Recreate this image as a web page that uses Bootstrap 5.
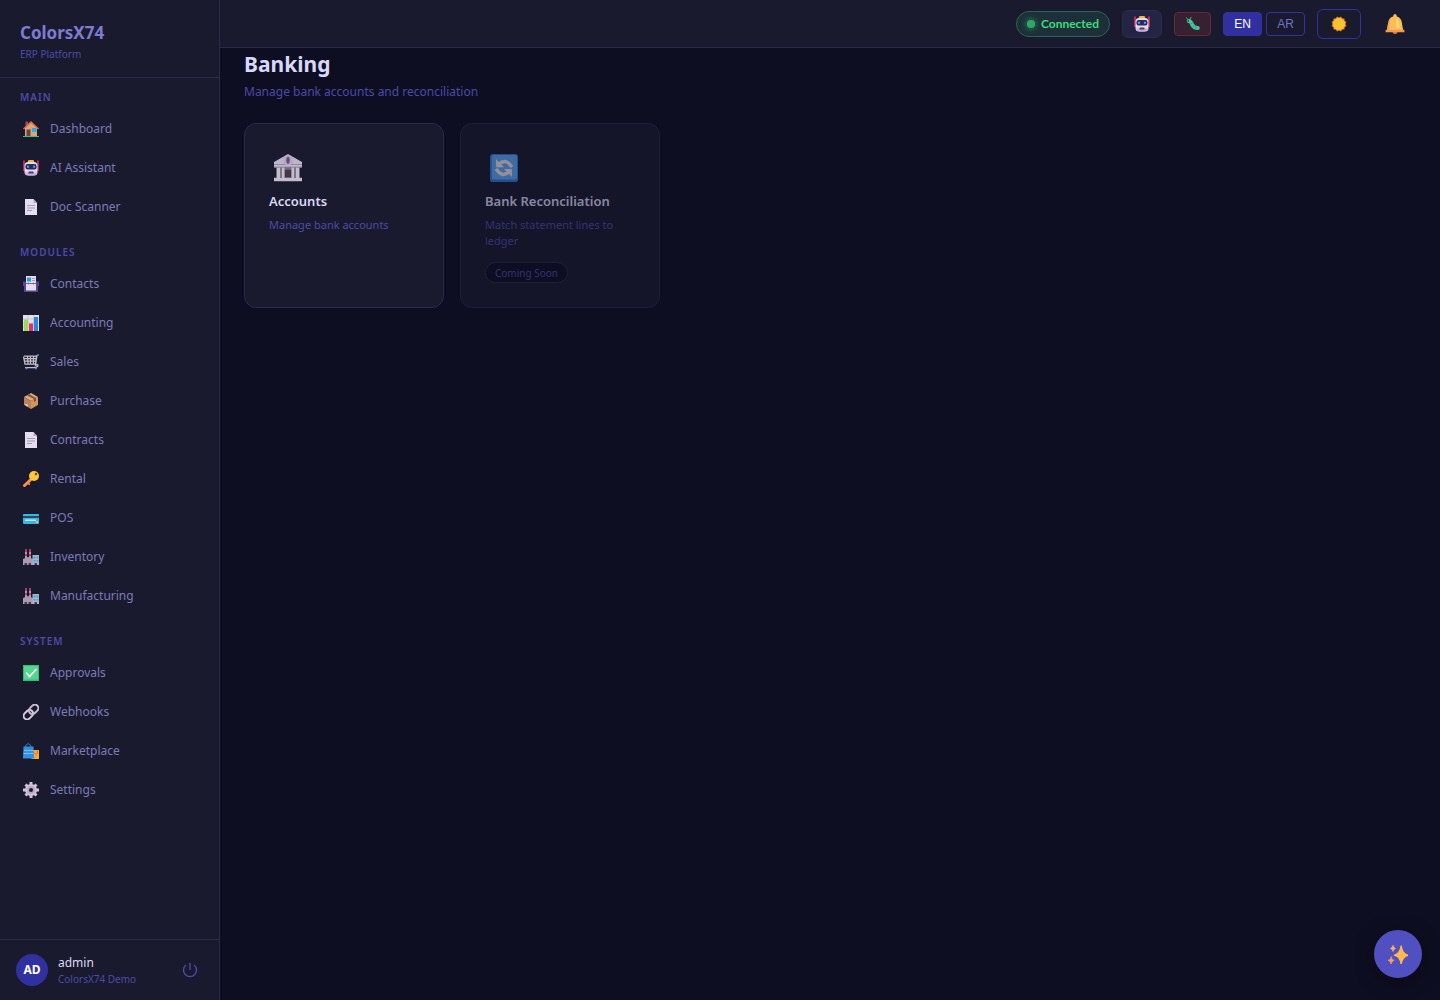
<!DOCTYPE html>
<html lang="en" data-bs-theme="dark">
<head>
<meta charset="utf-8">
<meta name="viewport" content="width=device-width, initial-scale=1">
<title>Banking - ColorsX74</title>
<link href="https://cdn.jsdelivr.net/npm/bootstrap@5.3.0/dist/css/bootstrap.min.css" rel="stylesheet">
<style>
:root{--page:#0e0e22;--panel:#1a1a2e;--line:#2a2a4a;--muted:#4a4aa8;--nav:#7a7ab8;--brand:#3030a0;--bright:#d8d8f8}
body{background:var(--page);color:var(--bright);font-family:"Noto Sans","Open Sans",sans-serif;font-size:13px}
button{font-family:inherit}
.side-panel{width:220px;background:var(--panel);border-right:1px solid var(--line)}
.brand-box{padding:20px 20px 14px;border-bottom:1px solid var(--line)}
.brand-name{font-size:17px;font-weight:700;line-height:25px;color:#7c7cd4}
.brand-sub{font-size:10px;line-height:18px;color:var(--muted)}
.side-nav{padding-top:12px}
.nav-group{margin-bottom:19px}
.group-label{font-size:10px;font-weight:600;letter-spacing:1px;line-height:14px;padding:0 20px 5px;margin:0;color:var(--muted);text-transform:uppercase}
.side-link{display:flex;align-items:center;gap:8px;height:39px;padding:0 20px;color:var(--nav);text-decoration:none;font-size:12px}
.side-link:hover{color:var(--bright)}
.ico-slot{width:22px;display:flex;justify-content:center}
.ico{width:16px;height:16px;display:block}
.user-box{height:61px;padding:0 16px;gap:10px;border-top:1px solid var(--line)}
.avatar{width:32px;height:32px;border-radius:50%;background:var(--brand);color:#fff;font-size:12px;font-weight:700}
.user-name{font-size:12px;line-height:16px}
.user-text{padding-top:1px}
.user-org{font-size:10px;line-height:16px;color:var(--muted)}
.plain-btn{background:none;border:0;padding:0;color:var(--muted)}
.top-bar{height:48px;background:var(--panel);border-bottom:1px solid var(--line);padding:0 24px;gap:12px}
.status-pill{height:26px;gap:6px;border-radius:13px;border:1px solid #276650;background:#1d3039;color:#3ddc7c;font:700 12px/24px Lato,sans-serif;padding:0 10px}
.status-dot{width:8px;height:8px;border-radius:50%;background:#2fa866;box-shadow:0 0 6px #2fa866}
.tool-btn{display:flex;align-items:center;justify-content:center;padding:0;border:1px solid;border-radius:6px;background:none}
.bot-btn{width:40px;height:28px;background:#242444;border-color:var(--line)}
.bug-btn{width:37px;height:24px;border-radius:4px;background:#37202f;border-color:#652838}
.lang-btn{width:39px;height:24px;border-radius:4px;border-color:var(--brand);color:#7070c8;font:12px "Liberation Sans",Arial,sans-serif}
.lang-btn.on{background:var(--brand);color:#fff}
.theme-btn{width:44px;height:30px;border-color:var(--brand)}
.bell-btn{width:43px;height:30px;border:0}
.page-body{padding:0 24px 24px}
.page-title{font-size:21px;font-weight:700;line-height:32px;margin:0 0 2px;color:var(--bright)}
.page-sub{font-size:12px;line-height:20px;margin:0 0 21px;color:var(--muted)}
.tile-grid{display:grid;grid-template-columns:repeat(auto-fill,200px);gap:16px}
.tile{background:var(--panel);border:1px solid var(--line);border-radius:12px;padding:24px;color:inherit;text-decoration:none}
.tile-off{opacity:.6}
.tile-ico{width:38px;height:40px;margin-bottom:3px;display:flex;align-items:center;justify-content:center}
.tile-ico .ico{width:28px;height:28px}
.tile-name{font-size:13px;font-weight:600;line-height:20px;margin:0 0 6px;color:var(--bright)}
.tile-text{font-size:11px;line-height:16px;margin:0;color:var(--muted)}
.soon{display:inline-block;margin-top:13px;height:21px;padding:0 9px;border:1px solid var(--line);border-radius:11px;background:var(--page);font-size:10px;line-height:20px;color:var(--muted)}
.ai-fab{position:fixed;right:18px;bottom:22px;width:48px;height:48px;border:0;border-radius:50%;background:#5050c0;box-shadow:0 4px 20px rgba(0,0,0,.4);display:flex;align-items:center;justify-content:center}
</style>
</head>
<body>
<svg class="d-none" aria-hidden="true">
<symbol id="home" viewBox="0 0 32 32"><path fill="#8a5a4a" d="M5 1h5v10H5z"/><path fill="#d9a877" d="M4 14 16 3l12 11v16H4z"/><path fill="#f4654a" d="M16 0 0 15l2 2L16 4l14 13 2-2z"/><path fill="#6b4248" d="M7 17h8v13H7z"/><path fill="#2da8f0" d="M18 14h9v8h-9z"/><path fill="#36c274" d="M0 30h32v2H0z"/></symbol>
<symbol id="bot" viewBox="0 0 32 32"><path stroke="#e8305f" stroke-width="3" d="M2 1v21M30 1v21"/><path fill="#f8b52c" d="M11 0h10l2 5H9z"/><rect x="3" y="4" width="26" height="27" rx="7" fill="#e5d8f1"/><path fill="#c7acdc" d="M4 25h24q-2 6-8 6h-8q-6 0-8-6z"/><rect x="5" y="8" width="22" height="11" rx="4" fill="#302a58"/><rect x="8" y="11" width="4" height="5" rx="2" fill="#29b6f6"/><rect x="20" y="11" width="4" height="5" rx="2" fill="#29b6f6"/><rect x="11" y="23" width="10" height="4" rx="1" fill="#4a3d62"/></symbol>
<symbol id="doc" viewBox="0 0 32 32"><path fill="#e5deef" d="M4 0h17l7 8v24H4z"/><path fill="#b4a7c3" d="M21 0v8h7z"/><path stroke="#a69ab7" stroke-width="2" d="M8 13h16M8 18h16M8 23h10"/></symbol>
<symbol id="cards" viewBox="0 0 32 32"><path fill="#594394" d="M0 11h32v9h-2v12H2V20H0z"/><path fill="#e6deef" d="M6 0h20v29H6z"/><path fill="#2499ee" d="M8 3h8v8H8z"/><path fill="#a99fba" d="M18 4h6v2h-6zM18 8h6v2h-6z"/><path stroke="#7b6c9c" stroke-width="2" fill="none" d="M6 15h20M11 13v4M21 13v4"/></symbol>
<symbol id="chart" viewBox="0 0 32 32"><path fill="#e6dfec" d="M0 0h32v32H0z"/><path stroke="#b7afbf" stroke-width="1" d="M0 8h32M0 16h32M0 24h32M10 0v32M21 0v32"/><path fill="#94dc59" d="M2 9h8v23H2z"/><path fill="#e92d68" d="M12 17h8v15h-8z"/><path fill="#2788dc" d="M22 4h8v28h-8z"/></symbol>
<symbol id="cart" viewBox="0 0 32 32"><path stroke="#c5bfc8" stroke-width="2.5" fill="none" d="M2 4h25L25 20H4L1 5M3 9h23M3 14h22M9 4l1 16M15 4v16M21 4v16M28 2l-3 21q5-4 5 1l-4 3H4"/><path stroke="#4791c9" stroke-width="3" d="M28 2h4"/><circle cx="7" cy="29" r="2" fill="#4791c9"/><circle cx="26" cy="29" r="2" fill="#4791c9"/></symbol>
<symbol id="box" viewBox="0 0 32 32"><path fill="#e0ad78" d="m16 0 14 8-14 8L2 8z"/><path fill="#bd805d" d="m2 8 14 8v16L2 24z"/><path fill="#d1955e" d="m30 8-14 8v16l14-8z"/><path fill="#835248" d="m8 5 4-3 14 8v6l-4 2v-6z"/><path fill="#f4dfd0" d="m5 21 5 3v3l-5-3z"/></symbol>
<symbol id="key" viewBox="0 0 32 32"><path stroke="#fa914b" stroke-width="6" stroke-linecap="round" d="M19 14 3 29"/><path stroke="#fa914b" stroke-width="3" d="m9 24 5 3"/><circle cx="22" cy="10" r="10" fill="#fec63b"/><circle cx="26" cy="6" r="2.5" fill="#5e4035"/></symbol>
<symbol id="bankcard" viewBox="0 0 32 32"><rect y="8" width="32" height="20" rx="2" fill="#32b7eb"/><path fill="#33445c" d="M0 12h32v4H0z"/><path fill="#d9dce9" d="M4 19h22v3H4z"/><path fill="#f5be40" d="M26 22h4v4h-4z"/></symbol>
<symbol id="factory" viewBox="0 0 32 32"><path fill="#a99cae" d="M4 1h4v18H4zM12 1h4v18h-4zM0 20l10-4 10 4v12H0z"/><path fill="#c13368" d="M4 2h4v4H4zM4 10h4v4H4zM12 2h4v4h-4zM12 10h4v4h-4z"/><path fill="#b3b0c6" d="M19 12h13v20H19z"/><path fill="#34a9e5" d="M21 15h4v4h-4zM27 15h4v4h-4zM21 22h4v3h-4zM27 22h4v3h-4z"/><path fill="#443a50" d="M3 28h5v4H3zM11 28h5v4h-5zM23 28h5v4h-5z"/></symbol>
<symbol id="check" viewBox="0 0 32 32"><path fill="#38b876" d="M0 0h32v32H0z"/><path fill="#55d68e" d="M2 2h28v27H2z"/><path d="m7 16 6 7L26 9" stroke="#fff" stroke-width="3" fill="none" stroke-linecap="round"/></symbol>
<symbol id="chain" viewBox="0 0 32 32"><g fill="none" stroke-width="4" transform="rotate(-45 16 16)"><rect x="-2" y="9" width="21" height="14" rx="7" stroke="#d8cddd"/><rect x="13" y="9" width="21" height="14" rx="7" stroke="#c9bfd0"/></g></symbol>
<symbol id="bags" viewBox="0 0 32 32"><path fill="#f6a934" d="M17 14h15v18H17z"/><path d="M22 19q6 9 7-3" fill="none" stroke="#e96c32" stroke-width="2"/><path fill="#348fe7" d="M1 7h20l1 24H0z"/><path d="M5 10V6q5-9 11 0v4" fill="none" stroke="#288bc1" stroke-width="2"/><path stroke="#7bc0f4" stroke-width="2" d="M2 15h19M1 21h20"/></symbol>
<symbol id="gear" viewBox="0 0 32 32"><g stroke="#cfc2da" stroke-width="6"><path d="M16 0v32M0 16h32M5 5l22 22M27 5 5 27"/></g><circle cx="16" cy="16" r="12" fill="#cfc2da"/><circle cx="16" cy="16" r="8" fill="#b9a8c8"/><circle cx="16" cy="16" r="4" fill="#1a1a2e"/></symbol>
<symbol id="bug" viewBox="0 0 32 32"><path d="M6 9q5 0 8 8t13 8" fill="none" stroke="#42c79b" stroke-width="9" stroke-linecap="round"/><path d="M4 6 1 1M9 5l3-5" stroke="#42c79b" stroke-width="2"/><circle cx="5" cy="9" r="2" fill="#244752"/><path stroke="#3293a0" stroke-width="2" d="m16 13-6 3m9 3-4 5m8-4-1 8"/></symbol>
<symbol id="sun" viewBox="0 0 32 32"><g fill="#f28a27"><path d="M5 5h22v22H5z"/><path transform="rotate(30 16 16)" d="M5 5h22v22H5z"/><path transform="rotate(60 16 16)" d="M5 5h22v22H5z"/></g><circle cx="16" cy="16" r="12" fill="#f9c22f"/></symbol>
<symbol id="bell" viewBox="0 0 32 32"><path fill="#cc744a" d="M12 27h8q0 5-4 5t-4-5z"/><path fill="#fbbd55" d="M16 0q3 0 3 4 7 2 8 10l2 12H3l2-12Q6 6 13 4q0-4 3-4z"/><path fill="#f39952" d="M9 8q-3 7-3 18H3l2-12zM1 25h30v4H1z"/><path fill="#ffdb7d" d="M18 7q5 2 5 15h-5z"/></symbol>
<symbol id="bank" viewBox="0 0 32 32"><path fill="#beb5c8" d="M16 0 32 9v6H0V9z"/><path fill="#736b80" d="M3 15h26v12H3z"/><path fill="#443748" d="M12 18h8v9h-8z"/><path fill="#c5bdcb" d="M3 15h4v12H3zM9 15h3v12H9zM20 15h3v12h-3zM25 15h4v12h-4zM0 27h32v4H0z"/><path stroke="#8f859a" d="M0 12h32M0 15h32"/><circle cx="16" cy="7" r="6" fill="#b5aabd"/><ellipse cx="16" cy="7" rx="2" ry="4" fill="#68459b"/></symbol>
<symbol id="sync" viewBox="0 0 32 32"><rect width="32" height="32" rx="3" fill="#3874d6"/><rect x="2" y="1" width="29" height="28" rx="2" fill="#5ea9f7"/><g fill="none" stroke="#efe6ef" stroke-width="4"><path d="M10 12q8-8 15 3"/><path d="M22 20q-8 8-15-3"/></g><path fill="#efe6ef" d="M7 6v9h9zM25 26v-9h-9z"/></symbol>
<symbol id="spark" viewBox="0 0 32 32"><path fill="#ffb84e" d="M21 3q2 13 11 15-9 2-11 14-2-12-11-14Q19 16 21 3z" stroke="#ffb84e" stroke-width="2" stroke-linejoin="round"/><path fill="#f99a67" d="M5 20q1 6 5 6-4 1-5 6-1-5-5-6 4 0 5-6z" stroke="#f99a67" stroke-width="1"/><path fill="#f9b067" d="M8 2q1 4 4 5-3 1-4 5-1-4-4-5 3-1 4-5z" stroke="#f9b067" stroke-width="1"/></symbol>
</svg>
<div class="d-flex min-vh-100">
<aside class="side-panel vh-100 sticky-top d-flex flex-column flex-shrink-0">
<div class="brand-box"><div class="brand-name">ColorsX74</div><div class="brand-sub">ERP Platform</div></div>
<nav class="side-nav flex-grow-1 overflow-hidden" aria-label="Modules">
<div class="nav-group"><h2 class="group-label">Main</h2>
<a class="side-link" href="#"><span class="ico-slot"><svg class="ico"><use href="#home"/></svg></span>Dashboard</a>
<a class="side-link" href="#"><span class="ico-slot"><svg class="ico"><use href="#bot"/></svg></span>AI Assistant</a>
<a class="side-link" href="#"><span class="ico-slot"><svg class="ico"><use href="#doc"/></svg></span>Doc Scanner</a></div>
<div class="nav-group"><h2 class="group-label">Modules</h2>
<a class="side-link" href="#"><span class="ico-slot"><svg class="ico"><use href="#cards"/></svg></span>Contacts</a>
<a class="side-link" href="#"><span class="ico-slot"><svg class="ico"><use href="#chart"/></svg></span>Accounting</a>
<a class="side-link" href="#"><span class="ico-slot"><svg class="ico"><use href="#cart"/></svg></span>Sales</a>
<a class="side-link" href="#"><span class="ico-slot"><svg class="ico"><use href="#box"/></svg></span>Purchase</a>
<a class="side-link" href="#"><span class="ico-slot"><svg class="ico"><use href="#doc"/></svg></span>Contracts</a>
<a class="side-link" href="#"><span class="ico-slot"><svg class="ico"><use href="#key"/></svg></span>Rental</a>
<a class="side-link" href="#"><span class="ico-slot"><svg class="ico"><use href="#bankcard"/></svg></span>POS</a>
<a class="side-link" href="#"><span class="ico-slot"><svg class="ico"><use href="#factory"/></svg></span>Inventory</a>
<a class="side-link" href="#"><span class="ico-slot"><svg class="ico"><use href="#factory"/></svg></span>Manufacturing</a></div>
<div class="nav-group"><h2 class="group-label">System</h2>
<a class="side-link" href="#"><span class="ico-slot"><svg class="ico"><use href="#check"/></svg></span>Approvals</a>
<a class="side-link" href="#"><span class="ico-slot"><svg class="ico"><use href="#chain"/></svg></span>Webhooks</a>
<a class="side-link" href="#"><span class="ico-slot"><svg class="ico"><use href="#bags"/></svg></span>Marketplace</a>
<a class="side-link" href="#"><span class="ico-slot"><svg class="ico"><use href="#gear"/></svg></span>Settings</a></div>
</nav>
<div class="user-box d-flex align-items-center flex-shrink-0">
<div class="avatar d-flex align-items-center justify-content-center">AD</div>
<div class="user-text flex-grow-1"><div class="user-name">admin</div><div class="user-org">ColorsX74 Demo</div></div>
<button class="plain-btn me-1" type="button" aria-label="Log out"><svg width="18" height="18" viewBox="0 0 18 18" fill="none" stroke="currentColor" stroke-width="1.4" class="d-block"><path d="M5 4a6.5 6.5 0 1 0 8 0M9 2v7"/></svg></button>
</div>
</aside>
<div class="flex-grow-1">
<header class="top-bar sticky-top d-flex align-items-center justify-content-end">
<div class="status-pill d-flex align-items-center"><span class="status-dot"></span>Connected</div>
<button class="tool-btn bot-btn" type="button" aria-label="AI assistant"><svg class="ico"><use href="#bot"/></svg></button>
<button class="tool-btn bug-btn" type="button" aria-label="Report a bug"><svg width="14" height="14"><use href="#bug"/></svg></button>
<div class="d-flex gap-1"><button class="tool-btn lang-btn on" type="button">EN</button><button class="tool-btn lang-btn" type="button">AR</button></div>
<button class="tool-btn theme-btn" type="button" aria-label="Light theme"><svg class="ico"><use href="#sun"/></svg></button>
<button class="tool-btn bell-btn" type="button" aria-label="Notifications"><svg width="20" height="20"><use href="#bell"/></svg></button>
</header>
<main class="page-body">
<h1 class="page-title">Banking</h1>
<p class="page-sub">Manage bank accounts and reconciliation</p>
<div class="tile-grid">
<a class="tile" href="#"><div class="tile-ico"><svg class="ico"><use href="#bank"/></svg></div><h2 class="tile-name">Accounts</h2><p class="tile-text">Manage bank accounts</p></a>
<div class="tile tile-off"><div class="tile-ico"><svg class="ico"><use href="#sync"/></svg></div><h2 class="tile-name">Bank Reconciliation</h2><p class="tile-text">Match statement lines to ledger</p><span class="soon align-top">Coming Soon</span></div>
</div>
</main>
</div>
</div>
<button class="ai-fab" type="button" aria-label="Open assistant"><svg width="20" height="20"><use href="#spark"/></svg></button>
<script src="https://cdn.jsdelivr.net/npm/bootstrap@5.3.0/dist/js/bootstrap.bundle.min.js"></script>
</body>
</html>
